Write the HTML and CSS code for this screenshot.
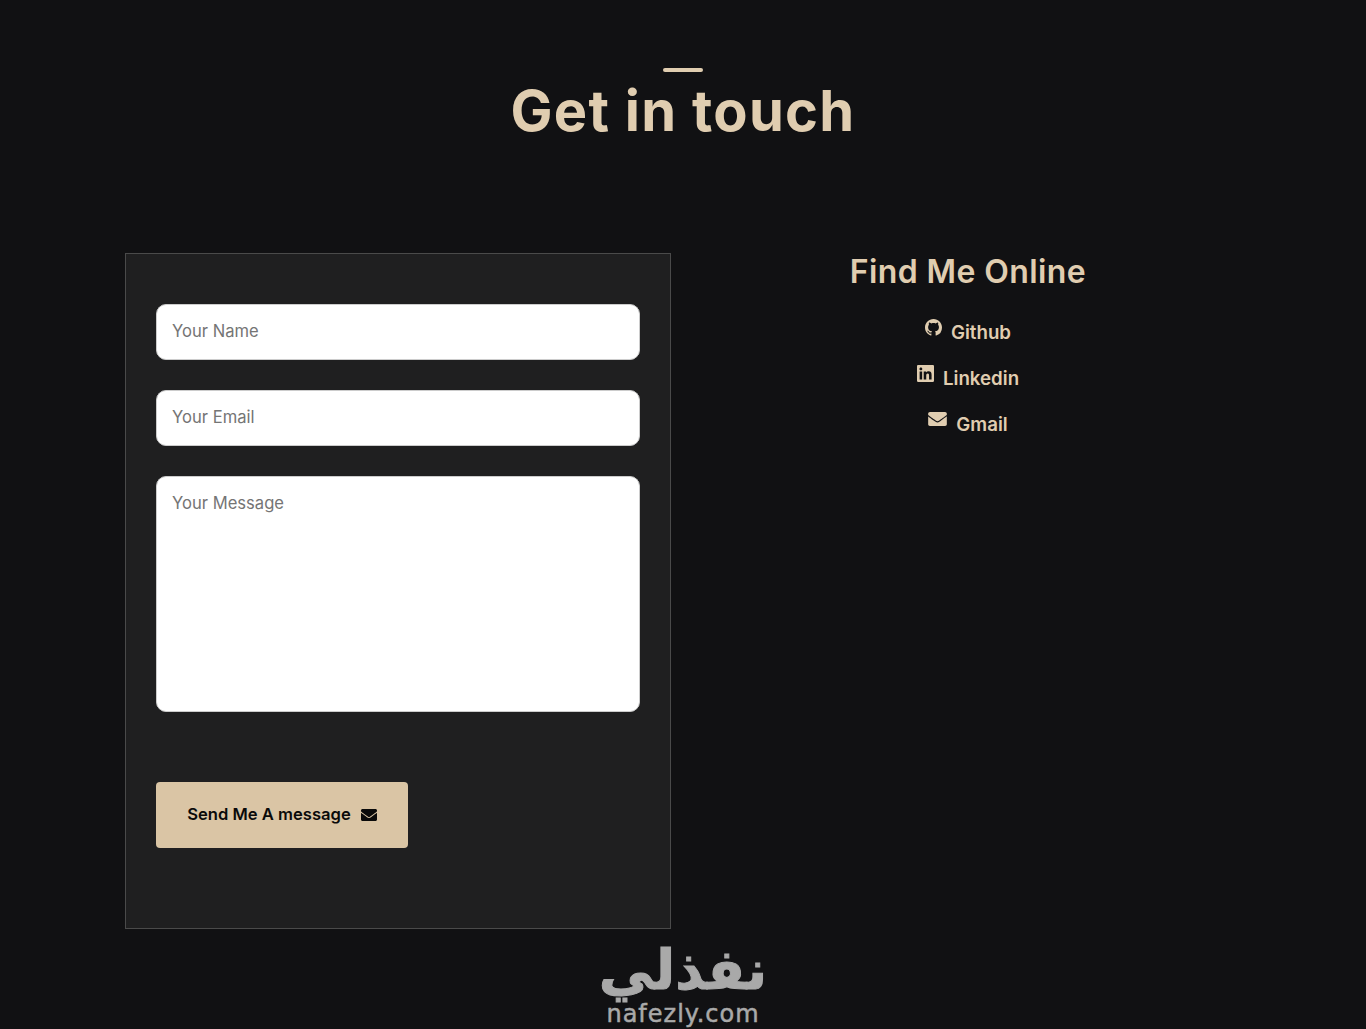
FILE: index.html
```html
<!DOCTYPE html>
<html lang="en">
<head>
<meta charset="UTF-8" />
<meta name="viewport" content="width=device-width, initial-scale=1" />
<title>Get in touch</title>
<link rel="stylesheet" href="styles.css">
</head>
<body>
<section class="contact">
  <div class="heading">
    <span class="heading-bar"></span>
    <h1>Get in touch</h1>
  </div>
  <div class="contact-grid">
    <form class="contact-form">
      <input type="text" placeholder="Your Name" />
      <input type="email" placeholder="Your Email" />
      <textarea placeholder="Your Message"></textarea>
      <button type="button" class="send-btn">
        Send Me A message
        <svg class="send-icon" viewBox="0 0 512 512"><path d="M502.3 190.8c3.9-3.1 9.7-.2 9.7 4.7V400c0 26.5-21.5 48-48 48H48c-26.5 0-48-21.5-48-48V195.6c0-5 5.7-7.8 9.7-4.7 22.4 17.4 52.1 39.5 154.1 113.6 21.1 15.4 56.7 47.8 92.2 47.6 35.7.3 72-32.8 92.3-47.6 102-74.1 131.6-96.3 154-113.7zM256 320c23.2.4 56.6-29.2 73.4-41.4 132.7-96.3 142.8-104.7 173.4-128.7 5.8-4.5 9.2-11.5 9.2-18.9v-19c0-26.5-21.5-48-48-48H48C21.5 64 0 85.5 0 112v19c0 7.4 3.4 14.3 9.2 18.9 30.6 23.9 40.7 32.4 173.4 128.7 16.8 12.2 50.2 41.8 73.4 41.4z"/></svg>
      </button>
    </form>
    <div class="online">
      <h2>Find Me Online</h2>
      <a class="online-link" href="#">
        <svg class="online-icon" viewBox="0 0 16 16"><path d="M8 0C3.58 0 0 3.58 0 8c0 3.54 2.29 6.53 5.47 7.59.4.07.55-.17.55-.38 0-.19-.01-.82-.01-1.49-2.01.37-2.53-.49-2.69-.94-.09-.23-.48-.94-.82-1.13-.28-.15-.68-.52-.01-.53.63-.01 1.08.58 1.23.82.72 1.21 1.87.87 2.33.66.07-.52.28-.87.51-1.07-1.78-.2-3.64-.89-3.64-3.95 0-.87.31-1.59.82-2.15-.08-.2-.36-1.02.08-2.12 0 0 .67-.21 2.2.82.64-.18 1.32-.27 2-.27.68 0 1.36.09 2 .27 1.53-1.04 2.2-.82 2.2-.82.44 1.1.16 1.92.08 2.12.51.56.82 1.27.82 2.15 0 3.07-1.87 3.75-3.65 3.95.29.25.54.73.54 1.48 0 1.07-.01 1.93-.01 2.2 0 .21.15.46.55.38A8.013 8.013 0 0016 8c0-4.42-3.58-8-8-8z"/></svg>
        Github
      </a>
      <a class="online-link" href="#">
        <svg class="online-icon" viewBox="0 32 448 448"><path d="M416 32H31.9C14.3 32 0 46.5 0 64.3v383.4C0 465.5 14.3 480 31.9 480H416c17.6 0 32-14.5 32-32.3V64.3c0-17.8-14.4-32.3-32-32.3zM135.4 416H69V202.2h66.5V416zm-33.2-243c-21.3 0-38.5-17.3-38.5-38.5S80.9 96 102.2 96c21.2 0 38.5 17.3 38.5 38.5 0 21.3-17.2 38.5-38.5 38.5zm282.1 243h-66.4V312c0-24.8-.5-56.7-34.5-56.7-34.6 0-39.9 27-39.9 54.9V416h-66.4V202.2h63.7v29.2h.9c8.9-16.8 30.6-34.5 62.9-34.5 67.2 0 79.7 44.3 79.7 101.9V416z"/></svg>
        Linkedin
      </a>
      <a class="online-link" href="#">
        <svg class="online-icon online-icon-wide" viewBox="0 64 512 384"><path d="M502.3 190.8c3.9-3.1 9.7-.2 9.7 4.7V400c0 26.5-21.5 48-48 48H48c-26.5 0-48-21.5-48-48V195.6c0-5 5.7-7.8 9.7-4.7 22.4 17.4 52.1 39.5 154.1 113.6 21.1 15.4 56.7 47.8 92.2 47.6 35.7.3 72-32.8 92.3-47.6 102-74.1 131.6-96.3 154-113.7zM256 320c23.2.4 56.6-29.2 73.4-41.4 132.7-96.3 142.8-104.7 173.4-128.7 5.8-4.5 9.2-11.5 9.2-18.9v-19c0-26.5-21.5-48-48-48H48C21.5 64 0 85.5 0 112v19c0 7.4 3.4 14.3 9.2 18.9 30.6 23.9 40.7 32.4 173.4 128.7 16.8 12.2 50.2 41.8 73.4 41.4z"/></svg>
        Gmail
      </a>
    </div>
  </div>
  <div class="logo">
    <span class="logo-ar" lang="ar" dir="rtl">نفذلي</span>
    <span class="logo-en">nafezly.com</span>
  </div>
</section>
</body>
</html>
```

FILE: styles.css
```css
* {
  box-sizing: border-box;
}
html, body {
  margin: 0;
  height: 1029px;
  overflow: hidden;
}
body {
  font-family: Inter, "Open Sans", sans-serif;
  background: #111113;
  color: #e0cdb0;
}
.contact {
  padding: 68px 125px 0;
}
.heading {
  display: flex;
  flex-direction: column;
  align-items: center;
}
.heading-bar {
  width: 40px;
  height: 4px;
  border-radius: 2px;
  background: #e0cdb0;
}
.heading h1 {
  margin: 0;
  height: 78px;
  font-size: 56px;
  line-height: 78px;
  font-weight: 700;
  letter-spacing: 1.3px;
}
.contact-grid {
  display: grid;
  grid-template-columns: 546px 546px;
  gap: 24px;
  margin-top: 103px;
}
.contact-form {
  display: flex;
  flex-direction: column;
  align-items: flex-start;
  gap: 30px;
  height: 676px;
  padding: 50px 30px;
  background: #1f1f20;
  border: 1px solid #4a4a4a;
}
.contact-form input, .contact-form textarea {
  display: block;
  width: 100%;
  padding: 14px 15px 16px;
  border: 1px solid #ccc;
  border-radius: 10px;
  background: #fff;
  font-family: inherit;
  font-size: 16.6px;
  line-height: 24px;
  resize: none;
}
.contact-form input {
  height: 56px;
}
.contact-form textarea {
  height: 236px;
}
.contact-form ::placeholder {
  color: #757575;
}
.send-btn {
  display: flex;
  align-items: center;
  justify-content: center;
  gap: 10px;
  width: 252px;
  height: 66px;
  margin-top: 40px;
  padding: 0 0 3px;
  border: none;
  border-radius: 4px;
  background: #dac5a5;
  color: #0a0a0a;
  font-family: inherit;
  font-size: 16.6px;
  font-weight: 600;
}
.send-icon {
  width: 16px;
  height: 16px;
  margin-top: 2px;
  fill: #0a0a0a;
}
.online {
  display: flex;
  flex-direction: column;
  align-items: center;
}
.online h2 {
  margin: 0 0 24px;
  height: 38px;
  font-size: 32px;
  line-height: 38px;
  font-weight: 600;
  letter-spacing: 0.4px;
}
.online-link {
  display: flex;
  align-items: flex-start;
  gap: 9px;
  height: 46px;
  padding-top: 4px;
  color: #e0cdb0;
  font-size: 18.7px;
  font-weight: 600;
  line-height: 28px;
  text-decoration: none;
}
.online-icon {
  width: 17px;
  height: 17px;
  fill: #e0cdb0;
}
.online-icon-wide {
  width: 19px;
  height: 14px;
  margin-top: 1px;
}
.logo {
  display: flex;
  flex-direction: column;
  align-items: center;
  margin-top: 10px;
  color: #a9a9a9;
}
.logo-ar {
  height: 62px;
  font-family: "DejaVu Sans", sans-serif;
  font-size: 55px;
  line-height: 62px;
  font-weight: 700;
  -webkit-text-stroke: 1px #a9a9a9;
}
.logo-en {
  font-family: "DejaVu Sans", sans-serif;
  font-size: 24px;
  line-height: 26px;
  letter-spacing: 1px;
  -webkit-text-stroke: 0.5px #a9a9a9;
}
```
